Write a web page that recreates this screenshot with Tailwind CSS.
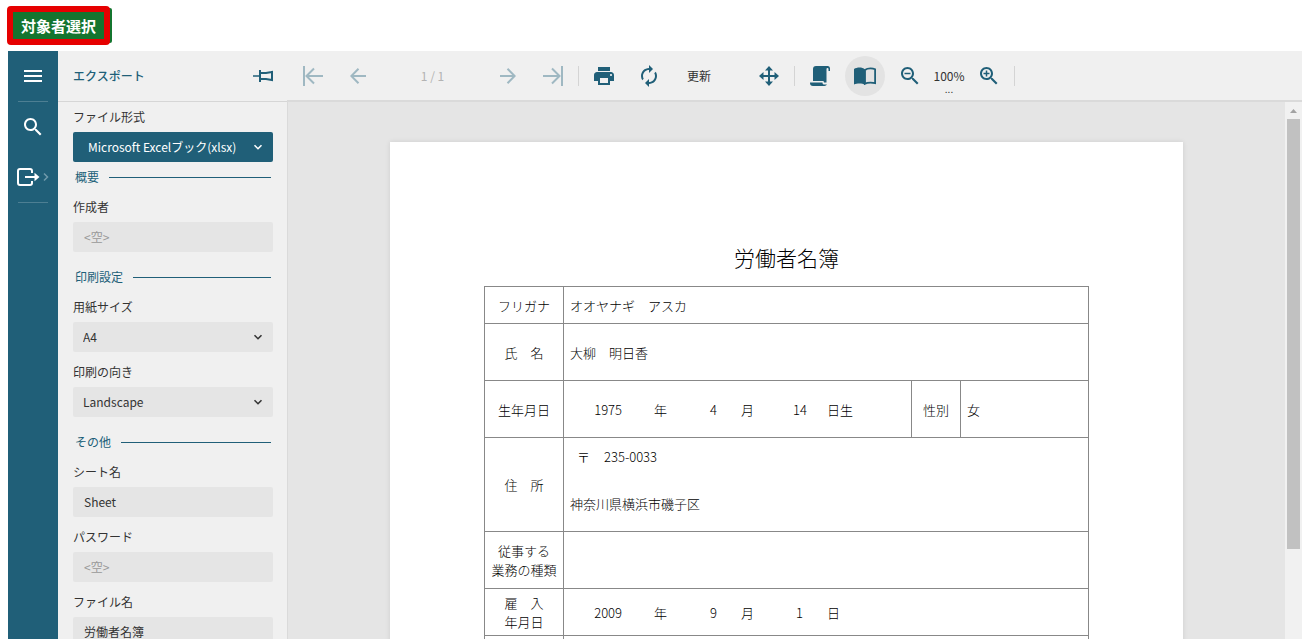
<!DOCTYPE html>
<html lang="ja">
<head>
    <meta charset="UTF-8">
    <meta name="viewport" content="width=device-width, initial-scale=1.0">
    <title>労働者名簿</title>
    <script src="https://cdn.jsdelivr.net/npm/@tailwindcss/browser@4"></script>
</head>
<body class="h-screen flex flex-col overflow-hidden bg-white font-['Noto_Sans_CJK_JP',sans-serif] text-xs text-[#333]">

    <header class="h-[51px] shrink-0 pl-[7px] pt-[6px]">
        <button type="button" class="h-[39px] px-2 rounded-sm border-6 border-[#e60000] bg-[#14752f] text-white text-[15px] font-bold leading-none shadow-[4px_0_0_-2px_#14752f] whitespace-nowrap">対象者選択</button>
    </header>

    <div class="flex-1 min-h-0 flex ml-2 mr-[14px] bg-[#f0f0f0]">

        <!-- サイドメニュー -->
        <nav class="w-[50px] shrink-0 flex flex-col items-center bg-[#205f78] text-white">
            <button type="button" aria-label="メニュー" class="size-[50px] flex items-center justify-center">
                <svg class="w-[18px] h-3" viewBox="0 0 18 12" fill="currentColor"><path d="M0 0h18v2H0zM0 5h18v2H0zM0 10h18v2H0z"/></svg>
            </button>
            <div class="w-[30px] h-px bg-[#4d7f93]"></div>
            <button type="button" aria-label="検索" class="size-[50px] flex items-center justify-center">
                <svg class="size-6" viewBox="0 0 24 24" fill="currentColor"><path d="M15.5 14h-.79l-.28-.27C15.41 12.59 16 11.11 16 9.5 16 5.91 13.09 3 9.5 3S3 5.91 3 9.5 5.91 16 9.5 16c1.61 0 3.09-.59 4.23-1.57l.27.28v.79l5 4.99L20.49 19l-4.99-5zm-6 0C7.01 14 5 11.99 5 9.5S7.01 5 9.5 5 14 7.01 14 9.5 11.99 14 9.5 14z"/></svg>
            </button>
            <button type="button" aria-label="エクスポート" class="size-[50px] flex items-center justify-center">
                <svg class="w-8 h-[18px]" viewBox="0 0 32 18" fill="none">
                    <path d="M15 5V3a2 2 0 0 0-2-2H3a2 2 0 0 0-2 2v12a2 2 0 0 0 2 2h10a2 2 0 0 0 2-2v-2" stroke="currentColor" stroke-width="2"/>
                    <path d="M8 9h11" stroke="currentColor" stroke-width="2"/>
                    <path d="M17.500 4.800l5 4.200-5 4.200z" fill="currentColor"/>
                    <path d="M27 5.500L30.500 9 27 12.500" stroke="#6f9aab" stroke-width="1.500"/>
                </svg>
            </button>
            <div class="w-[30px] h-px bg-[#4d7f93]"></div>
        </nav>

        <!-- エクスポート設定 -->
        <aside class="w-[229px] shrink-0 flex flex-col">
            <div class="h-[51px] shrink-0 flex items-center justify-between pl-[15px] pr-[14px] border-b border-[#d6d6d6]">
                <h2 class="font-medium text-[#205f78]">エクスポート</h2>
                <button type="button" aria-label="固定" class="text-[#205f78]">
                    <svg class="w-5 h-[14px]" viewBox="0 0 20 14" fill="none" stroke="currentColor" stroke-width="2"><path d="M0 7h7" stroke-width="1.500"/><path d="M7 1v12M7 4h6l6-1v8l-6-1H7M19 2v10"/></svg>
                </button>
            </div>
            <form class="flex-1 min-h-0 overflow-hidden flex flex-col pl-[15px] pr-[14px] leading-[30px] *:shrink-0">
                <label for="format">ファイル形式</label>
                <div class="relative h-[30px] text-white">
                    <select id="format" class="appearance-none w-full h-[30px] pl-[15px] rounded-xs bg-[#205f78]"><option>Microsoft Excelブック(xlsx)</option></select>
                    <svg class="absolute right-[10px] top-3 w-[10px] h-[7px] pointer-events-none" viewBox="0 0 10 7" fill="none" stroke="currentColor" stroke-width="1.600"><path d="M1.500 1.200L5 4.700l3.500-3.500"/></svg>
                </div>
                <h3 class="flex items-center gap-[10px] px-[2px] text-[#205f78] after:flex-1 after:h-px after:bg-[#205f78]">概要</h3>
                <label for="author">作成者</label>
                <input id="author" type="text" placeholder="&lt;空&gt;" class="h-[30px] px-[11px] rounded-xs bg-[#e5e5e5] placeholder:text-[#999]">
                <h3 class="flex items-center gap-[10px] mt-[10px] px-[2px] text-[#205f78] after:flex-1 after:h-px after:bg-[#205f78]">印刷設定</h3>
                <label for="paper">用紙サイズ</label>
                <div class="relative h-[30px]">
                    <select id="paper" class="appearance-none w-full h-[30px] pl-[10px] rounded-xs bg-[#e5e5e5]"><option>A4</option></select>
                    <svg class="absolute right-[10px] top-3 w-[10px] h-[7px] pointer-events-none" viewBox="0 0 10 7" fill="none" stroke="currentColor" stroke-width="1.600"><path d="M1.500 1.200L5 4.700l3.500-3.500"/></svg>
                </div>
                <label for="orientation" class="mt-[5px]">印刷の向き</label>
                <div class="relative h-[30px]">
                    <select id="orientation" class="appearance-none w-full h-[30px] pl-[10px] rounded-xs bg-[#e5e5e5]"><option>Landscape</option></select>
                    <svg class="absolute right-[10px] top-3 w-[10px] h-[7px] pointer-events-none" viewBox="0 0 10 7" fill="none" stroke="currentColor" stroke-width="1.600"><path d="M1.500 1.200L5 4.700l3.500-3.500"/></svg>
                </div>
                <h3 class="flex items-center gap-[10px] mt-[10px] px-[2px] text-[#205f78] after:flex-1 after:h-px after:bg-[#205f78]">その他</h3>
                <label for="sheet">シート名</label>
                <input id="sheet" type="text" value="Sheet" class="h-[30px] px-[11px] rounded-xs bg-[#e5e5e5]">
                <label for="password" class="mt-[5px]">パスワード</label>
                <input id="password" type="password" placeholder="&lt;空&gt;" class="h-[30px] px-[11px] rounded-xs bg-[#e5e5e5] placeholder:text-[#999]">
                <label for="filename" class="mt-[5px]">ファイル名</label>
                <input id="filename" type="text" value="労働者名簿" class="h-[30px] px-[11px] rounded-xs bg-[#e5e5e5]">
            </form>
        </aside>

        <main class="flex-1 min-w-0 flex flex-col">
            <!-- ツールバー -->
            <div class="h-[51px] shrink-0 flex items-center pl-[3px] border-b-2 border-[#dadada] text-[#205f78]">
                <button type="button" aria-label="最初のページ" class="w-[45px] h-10 flex items-center justify-center text-[#9fb8c2]">
                    <svg class="size-5" viewBox="0 0 20 20" fill="none" stroke="currentColor" stroke-width="2"><path d="M1 0v20M20 10H4M11 2.500L3.500 10l7.500 7.500"/></svg>
                </button>
                <button type="button" aria-label="前のページ" class="w-[45px] h-10 flex items-center justify-center text-[#9fb8c2]">
                    <svg class="size-4" viewBox="0 0 16 16" fill="none" stroke="currentColor" stroke-width="2"><path d="M16 8H2M8.500 .8L1.300 8l7.200 7.200"/></svg>
                </button>
                <div class="w-[105px] text-center text-[#b3b3b3]">1 / 1</div>
                <button type="button" aria-label="次のページ" class="w-[45px] h-10 flex items-center justify-center text-[#9fb8c2]">
                    <svg class="size-4" viewBox="0 0 16 16" fill="none" stroke="currentColor" stroke-width="2"><path d="M0 8h14M7.500 .8L14.700 8l-7.200 7.200"/></svg>
                </button>
                <button type="button" aria-label="最後のページ" class="w-[45px] h-10 flex items-center justify-center text-[#9fb8c2]">
                    <svg class="size-5" viewBox="0 0 20 20" fill="none" stroke="currentColor" stroke-width="2"><path d="M19 0v20M0 10h16M9 2.500l7.500 7.500L9 17.500"/></svg>
                </button>
                <div class="w-px h-5 ml-[3px] mr-[2px] bg-[#d4d4d4]"></div>
                <button type="button" aria-label="印刷" class="w-[45px] h-10 flex items-center justify-center">
                    <svg class="size-6" viewBox="0 0 24 24" fill="currentColor"><path d="M19 8H5c-1.660 0-3 1.340-3 3v6h4v4h12v-4h4v-6c0-1.660-1.340-3-3-3zm-3 11H8v-5h8v5zm3-7c-.55 0-1-.45-1-1s.45-1 1-1 1 .45 1 1-.45 1-1 1zm-1-9H6v4h12V3z"/></svg>
                </button>
                <button type="button" aria-label="再読み込み" class="w-[45px] h-10 flex items-center justify-center">
                    <svg class="size-6" viewBox="0 0 24 24" fill="currentColor"><path d="M12 6v3l4-4-4-4v3c-4.420 0-8 3.580-8 8 0 1.570.46 3.030 1.240 4.260L6.700 14.800c-.45-.83-.7-1.790-.7-2.800 0-3.310 2.690-6 6-6zm6.760 1.740L17.300 9.200c.44.84.7 1.790.7 2.800 0 3.310-2.690 6-6 6v-3l-4 4 4 4v-3c4.420 0 8-3.580 8-8 0-1.570-.46-3.030-1.240-4.260z"/></svg>
                </button>
                <button type="button" class="w-[75px] h-10 pl-4 text-left text-[#333]">更新</button>
                <button type="button" aria-label="移動" class="w-[45px] h-10 flex items-center justify-center">
                    <svg class="size-5" viewBox="0 0 20 20" fill="currentColor"><path d="M9 3h2v14H9zM3 9h14v2H3zM10 0l4 4.500H6zM10 20l-4-4.500h8zM0 10l4.500-4v8zM20 10l-4.500 4V6z"/></svg>
                </button>
                <div class="w-px h-5 ml-[3px] mr-[2px] bg-[#d4d4d4]"></div>
                <button type="button" aria-label="連続表示" class="w-[45px] h-10 flex items-center justify-center">
                    <svg class="size-5" viewBox="0 0 20 20" fill="currentColor"><path d="M6 0h12a2.500 2.500 0 0 1 2 2.500V5h-1.500V3a1 1 0 0 0-2 0v13.500H14L13.500 15H3V3a3 3 0 0 1 3-3zM0 16.500h12.500c0 1.500.5 2 2 2H17a3 3 0 0 1-2.500 1.500H3a3 3 0 0 1-3-3z"/></svg>
                </button>
                <button type="button" aria-label="ページ表示" class="w-[45px] h-10 flex items-center justify-center">
                    <span class="size-10 rounded-full bg-[#e3e3e3] flex items-center justify-center">
                        <svg class="w-[22px] h-[18px]" viewBox="0 0 22 18"><path d="M11 2.500C9.500 1 7.500.5 5.500.5S1.500 1 0 2v15.500c1.500-.8 3.500-1 5.500-1s4 .3 5.500 1.300z" fill="currentColor"/><path d="M11 3c1.500-1.300 3.500-1.700 5.500-1.700 1.800 0 3.300.3 4.600 1v13.800c-1.400-.4-3-.5-4.600-.5-2 0-4 .2-5.500 1.200z" fill="none" stroke="currentColor" stroke-width="1.800"/></svg>
                    </span>
                </button>
                <button type="button" aria-label="縮小" class="w-[45px] h-10 flex items-center justify-center">
                    <svg class="size-6" viewBox="0 0 24 24" fill="currentColor"><path d="M15.500 14h-.79l-.28-.27C15.410 12.590 16 11.110 16 9.500 16 5.910 13.090 3 9.500 3S3 5.910 3 9.500 5.910 16 9.500 16c1.610 0 3.090-.59 4.230-1.570l.27.28v.79l5 4.990L20.490 19l-4.990-5zm-6 0C7.010 14 5 11.990 5 9.500S7.010 5 9.500 5 14 7.010 14 9.500 11.990 14 9.500 14zM6.500 8.800h6v1.500h-6z"/></svg>
                </button>
                <button type="button" class="relative w-[34px] h-10 text-center text-[#333]">100%<span class="absolute inset-x-0 bottom-0 text-[10px]">...</span></button>
                <button type="button" aria-label="拡大" class="w-[45px] h-10 flex items-center justify-center">
                    <svg class="size-6" viewBox="0 0 24 24" fill="currentColor"><path d="M15.500 14h-.79l-.28-.27C15.410 12.590 16 11.110 16 9.500 16 5.910 13.090 3 9.500 3S3 5.910 3 9.500 5.910 16 9.500 16c1.610 0 3.090-.59 4.230-1.570l.27.28v.79l5 4.990L20.490 19l-4.990-5zm-6 0C7.010 14 5 11.990 5 9.500S7.010 5 9.500 5 14 7.010 14 9.500 11.990 14 9.500 14zM6.500 8.800h6v1.500h-6zM8.750 6.500h1.500v6h-1.500z"/></svg>
                </button>
                <div class="w-px h-5 ml-[3px] bg-[#d4d4d4]"></div>
            </div>

            <div class="flex-1 min-h-0 flex border-l border-[#dadada]">
                <!-- 帳票 -->
                <div class="flex-1 min-w-0 flex justify-center items-start overflow-hidden bg-[#e5e5e5] pt-10">
                    <article class="w-[793px] shrink-0 h-[1123px] px-[94px] pt-[102px] bg-white shadow-[0_0_5px_rgba(0,0,0,0.1)] font-light text-black">
                        <h1 class="h-[42px] leading-[26px] text-[21px] text-center">労働者名簿</h1>
                        <table class="w-full table-fixed border-collapse text-[13px] leading-[19px] [&_td]:border [&_th]:border [&_td]:border-[#888] [&_th]:border-[#888] [&_th]:font-light [&_th]:p-0 [&_td]:pt-0">
                            <colgroup>
                                <col class="w-[79px]">
                                <col>
                                <col class="w-[49px]">
                                <col class="w-[128px]">
                            </colgroup>
                            <tbody>
                                <tr class="h-[37px]">
                                    <th scope="row">フリガナ</th>
                                    <td colspan="3" class="pl-[6px]">オオヤナギ　アスカ</td>
                                </tr>
                                <tr class="h-[57px]">
                                    <th scope="row">氏　名</th>
                                    <td colspan="3" class="pl-[6px]">大柳　明日香</td>
                                </tr>
                                <tr class="h-[57px]">
                                    <th scope="row">生年月日</th>
                                    <td>
                                        <div class="grid grid-cols-[58px_45px_50px_37px_53px_1fr] text-right">
                                            <span>1975</span><span>年</span><span>4</span><span>月</span><span>14</span><span class="pl-5 text-left">日生</span>
                                        </div>
                                    </td>
                                    <th scope="row">性別</th>
                                    <td class="pl-[6px]">女</td>
                                </tr>
                                <tr class="h-[94px]">
                                    <th scope="row">住　所</th>
                                    <td colspan="3" class="pl-[6px] pb-[10px]">
                                        <div class="flex gap-[14px] pl-[7px] mb-7"><span>〒</span><span>235-0033</span></div>
                                        <div>神奈川県横浜市磯子区</div>
                                    </td>
                                </tr>
                                <tr class="h-[57px]">
                                    <th scope="row">従事する<br>業務の種類</th>
                                    <td colspan="3"></td>
                                </tr>
                                <tr class="h-[47px]">
                                    <th scope="row">雇　入<br>年月日</th>
                                    <td colspan="3">
                                        <div class="grid grid-cols-[58px_45px_50px_37px_53px_1fr] text-right">
                                            <span>2009</span><span>年</span><span>9</span><span>月</span><span class="pr-1">1</span><span class="pl-5 text-left">日</span>
                                        </div>
                                    </td>
                                </tr>
                                <tr class="h-[57px]">
                                    <th></th>
                                    <td colspan="3"></td>
                                </tr>
                            </tbody>
                        </table>
                    </article>
                </div>

                <!-- スクロールバー -->
                <div class="w-[17px] shrink-0 flex flex-col items-center bg-[#f1f1f1]">
                    <div class="h-[17px] flex items-center">
                        <svg class="w-[7px] h-1" viewBox="0 0 7 4" fill="#a3a3a3"><path d="M3.500 0L7 4H0z"/></svg>
                    </div>
                    <div class="w-[13px] h-4/5 shrink-0 bg-[#c1c1c1]"></div>
                </div>
            </div>
        </main>
    </div>

</body>
</html>
